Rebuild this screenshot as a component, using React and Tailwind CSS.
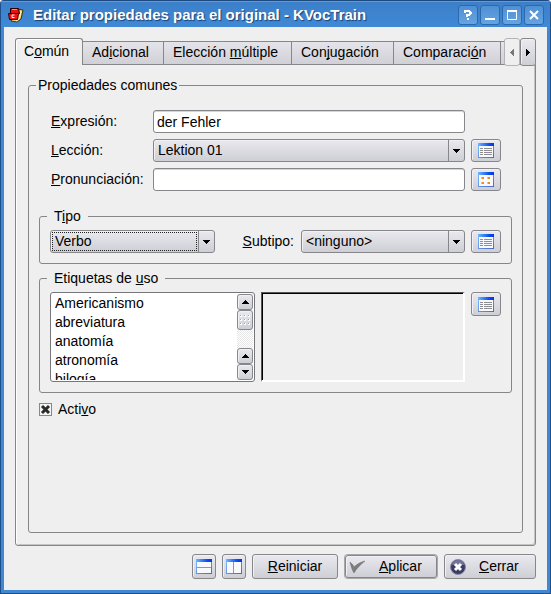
import React from "react";

const frame = "rounded-[3px] bg-linear-to-b from-[#e9e9ee] to-[#cecfd6]";
const face = `${frame} border border-[#86868b] shadow-[inset_1px_1px_0_#f1f1f5]`;
const defaultFace = `${frame} border border-[#86868b] shadow-[0_0_0_1px_#a8a8ac,inset_1px_1px_0_#f1f1f5]`;
const fieldsetLine = "border border-[#868686] rounded-[3px] min-w-0";

function U({ children }) {
  return <u className="underline [text-decoration-skip-ink:none]">{children}</u>;
}

function WindowGlyph({ id, children }) {
  return (
    <svg width="16" height="15" viewBox="0 0 16 15" shapeRendering="crispEdges" aria-hidden="true">
      <defs>
        <linearGradient id={id + "-bar"}>
          <stop offset="0" stopColor="#6db9ff" />
          <stop offset="0.7" stopColor="#0a4cf0" />
          <stop offset="1" stopColor="#0038dc" />
        </linearGradient>
        <linearGradient id={id + "-edge"} x2="1" y2="1">
          <stop offset="0" stopColor="#7cc0ff" />
          <stop offset="1" stopColor="#4a66c8" />
        </linearGradient>
      </defs>
      <rect width="16" height="15" fill={`url(#${id}-edge)`} />
      <rect x="1" y="3" width="14" height="11" fill="#f8f9fe" />
      <rect width="16" height="3" fill={`url(#${id}-bar)`} />
      {children}
    </svg>
  );
}

function ListGlyph({ id }) {
  return (
    <WindowGlyph id={id}>
      {[5, 7, 9, 11].map((y) => (
        <g key={y} fill="#8e8e92">
          <rect x="2" y={y} width="3" height="1" />
          <rect x="6" y={y} width="8" height="1" />
        </g>
      ))}
    </WindowGlyph>
  );
}

function DotsGlyph({ id }) {
  return (
    <WindowGlyph id={id}>
      {[5, 10].map((y) => (
        <g key={y} fill="#f08a1c">
          <rect x="4" y={y} width="2" height="2" />
          <rect x="10" y={y} width="2" height="2" />
          <rect x="3" y={y} width="1" height="2" fill="#fbc27a" />
          <rect x="9" y={y} width="1" height="2" fill="#fbc27a" />
        </g>
      ))}
    </WindowGlyph>
  );
}

function IconButton({ label, className = "h-[23px]", children }) {
  return (
    <button type="button" aria-label={label} className={`${face} flex items-center justify-center ${className}`}>
      {children}
    </button>
  );
}

function Arrow({ dir, className = "text-black" }) {
  const shapes = {
    up: "M3 0h1v1h1v1h1v1h1v1H0V3h1V2h1V1h1z",
    down: "M0 0h7v1H6v1H5v1H4v1H3V3H2V2H1V1H0z",
    left: "M4 0v7H3V6H2V5H1V4H0V3h1V2h1V1h1V0z",
    right: "M0 0v7h1V6h1V5h1V4h1V3H3V2H2V1H1V0z",
  };
  const wide = dir === "up" || dir === "down";
  return (
    <svg
      width={wide ? 7 : 4}
      height={wide ? 4 : 7}
      shapeRendering="crispEdges"
      className={`fill-current ${className}`}
      aria-hidden="true"
    >
      <path d={shapes[dir]} />
    </svg>
  );
}

function Combo({ id, value, focused }) {
  return (
    <div className="relative h-[23px]">
      <select id={id} defaultValue={value} className={`${face} h-full w-full appearance-none pb-px pl-1 outline-none`}>
        <option>{value}</option>
      </select>
      {focused && (
        <span className="pointer-events-none absolute inset-y-[2px] right-[18px] left-[2px] border border-dotted border-[#222]" />
      )}
      <span className="pointer-events-none absolute inset-y-px right-px flex w-4 items-center justify-center border-l border-[#86868b]">
        <Arrow dir="down" />
      </span>
    </div>
  );
}

function TitleButton({ label, children }) {
  return (
    <button
      type="button"
      aria-label={label}
      className="flex size-5 items-center justify-center rounded-[3px] border border-[#2d68ad] bg-linear-to-b from-[#4f8fd3] to-[#65a4e2]"
    >
      <svg width="12" height="12" viewBox="0 0 12 12" fill="none" stroke="#fff" strokeWidth="2" className="shrink-0" aria-hidden="true">
        {children}
      </svg>
    </button>
  );
}

function TitleBar() {
  return (
    <header className="flex h-[27px] items-center border-t border-[#1c4a80] bg-linear-to-b from-[#3c7fc8] to-[#4089d6] pr-[6px] pl-[7px] shadow-[inset_0_1px_0_#5a9ee0]">
      <svg width="16" height="16" viewBox="0 0 16 16" className="mt-px mr-[9px] shrink-0" aria-hidden="true">
        <path d="M9 2l6 1-2 9-4 3-6-1z" fill="#ecd26c" stroke="#3c3010" />
        <path d="M13 4l-2 8-3 2" fill="none" stroke="#fff7c0" />
        <path d="M2.500 1.500h8l1 5h-9z" fill="#e81010" stroke="#2a0000" />
        <path d="M4 2.500h5" stroke="#ff8a80" />
        <path d="M0.500 6.500h10l-1 6h-8z" fill="#f01414" stroke="#3a0000" />
        <path d="M6.500 8H4v2.500h2.500" fill="none" stroke="#fff" />
      </svg>
      <h1 className="min-w-0 flex-1 truncate text-[15px] font-bold text-white [text-shadow:1px_1px_1px_#173f70]">
        Editar propiedades para el original - KVocTrain
      </h1>
      <div className="mt-[2px] flex gap-[2px]">
        <TitleButton label="Ayuda">
          <path d="M2 2h6M8 2v4M9 3v2M3 1v3M8 6H5v2M6 9v2" />
        </TitleButton>
        <TitleButton label="Minimizar">
          <path d="M1 10h10" />
        </TitleButton>
        <TitleButton label="Maximizar">
          <path d="M1 2h10" />
          <path d="M1.500 2v8.500h9V2" strokeWidth="1" />
        </TitleButton>
        <TitleButton label="Cerrar ventana">
          <path d="M2 2l8 8M10 2l-8 8" />
        </TitleButton>
      </div>
    </header>
  );
}

function Tab({ width, children }) {
  return (
    <button
      type="button"
      role="tab"
      aria-selected="false"
      className={`h-6 shrink-0 border-y border-r border-[#86868b] bg-linear-to-b from-[#e4e4e9] to-[#d0d0d7] pb-px pl-[9px] text-left ${width}`}
    >
      {children}
    </button>
  );
}

function Tabs() {
  return (
    <div className="relative z-10 -mb-px flex h-[27px]">
      <div role="tablist" className="flex min-w-0 flex-1 items-end overflow-hidden">
        <button
          type="button"
          role="tab"
          aria-selected="true"
          className="h-[27px] w-[68px] shrink-0 rounded-t-[3px] border border-b-0 border-[#868686] bg-[#efefef] pb-[2px] pl-2 text-left shadow-[inset_1px_1px_0_#fff]"
        >
          C<U>o</U>mún
        </button>
        <Tab width="w-[81px]">Ad<U>i</U>cional</Tab>
        <Tab width="w-[128px]">Elección <U>m</U>últiple</Tab>
        <Tab width="w-[102px]">Con<U>j</U>ugación</Tab>
        <Tab width="w-[107px]">Comparaci<U>ó</U>n</Tab>
        <Tab width="w-[60px]"> </Tab>
      </div>
      <button
        type="button"
        aria-label="Pestañas anteriores"
        disabled
        className="flex h-[28px] w-4 items-center justify-center rounded-[3px] border border-[#b4b4b8] bg-[#efefef]"
      >
        <Arrow dir="left" className="text-[#777]" />
      </button>
      <button
        type="button"
        aria-label="Pestañas siguientes"
        className={`${face} flex h-[28px] w-4 items-center justify-center`}
      >
        <Arrow dir="right" />
      </button>
    </div>
  );
}

function ScrollButton({ dir, label }) {
  return (
    <button type="button" aria-label={label} className={`${face} flex h-4 w-full shrink-0 items-center justify-center`}>
      <Arrow dir={dir} />
    </button>
  );
}

function UsageList() {
  return (
    <div className="flex h-[90px] rounded-[3px] border border-[#77777b] bg-white p-px">
      <select
        multiple
        aria-labelledby="uso"
        className="h-full min-w-0 flex-1 appearance-none overflow-hidden bg-white pt-px outline-none"
      >
        {["Americanismo", "abreviatura", "anatomía", "atronomía", "bilogía"].map((name) => (
          <option key={name} className="h-[19px] px-[3px] leading-[19px]">
            {name}
          </option>
        ))}
      </select>
      <div className="flex w-4 flex-col bg-[repeating-conic-gradient(#e6e6e6_0_25%,#fff_0_50%)] bg-size-[2px_2px]">
        <ScrollButton dir="up" label="Subir" />
        <div className={`${face} flex h-5 items-center justify-center`}>
          <svg width="10" height="10" shapeRendering="crispEdges" aria-hidden="true">
            {[0, 4, 8].map((y) =>
              [0, 4, 8].map((x) => (
                <g key={x + "-" + y}>
                  <rect x={x} y={y} width="2" height="2" fill="#fff" />
                  <rect x={x} y={y} width="1" height="1" fill="#a2a2a8" />
                </g>
              ))
            )}
          </svg>
        </div>
        <div className="flex-1" />
        <ScrollButton dir="up" label="Subir una línea" />
        <ScrollButton dir="down" label="Bajar" />
      </div>
    </div>
  );
}

const textBox =
  "h-[23px] w-full min-w-0 rounded-[3px] border border-[#86868b] bg-white pl-[3px] outline-none shadow-[inset_0_1px_0_#d5d5d5]";

export default function App() {
  return (
    <div className="min-h-screen bg-white font-['Liberation_Sans',Arial,sans-serif] text-sm leading-[17px] text-black">
      <div className="flex min-h-screen flex-col overflow-hidden rounded-t-[4px] border-r border-b border-l border-[#1f4f88] bg-[#3f88d5]">
        <TitleBar />
        <main className="mx-[3px] mb-[3px] flex flex-1 flex-col bg-[#efefef] p-[11px]">
          <Tabs />
          <section className="flex flex-1 flex-col rounded-b-[3px] border border-[#868686] p-3 shadow-[inset_1px_0_0_#fff,inset_-1px_-1px_0_#c4c4c4]">
            <fieldset className={`${fieldsetLine} flex-1 px-[10px] pt-4`}>
              <legend className="-ml-[3px] px-[2px]">Propiedades comunes</legend>

              <div className="mx-[11px] grid grid-cols-[97px_1fr_30px] items-center gap-[6px]">
                <label htmlFor="expresion" className="pl-px"><U>E</U>xpresión:</label>
                <input id="expresion" defaultValue="der Fehler" className={textBox} />
                <span />
                <label htmlFor="leccion" className="pl-px"><U>L</U>ección:</label>
                <Combo id="leccion" value="Lektion 01" />
                <IconButton label="Editar lecciones"><ListGlyph id="g1" /></IconButton>
                <label htmlFor="pronunciacion" className="pl-px"><U>P</U>ronunciación:</label>
                <input id="pronunciacion" className={textBox} />
                <IconButton label="Caracteres fonéticos"><DotsGlyph id="g2" /></IconButton>
              </div>

              <fieldset className={`${fieldsetLine} mt-[17px] px-[10px] pt-[5px] pb-[10px]`}>
                <legend className="-ml-[3px] px-[7px]">T<U>i</U>po</legend>
                <div className="grid grid-cols-[165fr_86px_164fr_36px] items-center">
                  <Combo id="tipo" value="Verbo" focused />
                  <label htmlFor="subtipo" className="pr-[7px] text-right"><U>S</U>ubtipo:</label>
                  <Combo id="subtipo" value="<ninguno>" />
                  <IconButton label="Editar tipos" className="ml-[6px] h-[23px]"><ListGlyph id="g3" /></IconButton>
                </div>
              </fieldset>

              <fieldset className={`${fieldsetLine} mt-[6px] px-[10px] pt-[5px] pb-[10px]`}>
                <legend id="uso" className="-ml-[3px] px-[7px]">Etiquetas de <U>u</U>so</legend>
                <div className="grid grid-cols-[205fr_204fr_30px] items-start gap-[6px]">
                  <UsageList />
                  <div className="h-[90px] border-t border-r-2 border-b-2 border-l border-t-[#555] border-r-white border-b-white border-l-[#555] shadow-[inset_1px_1px_0_#000]" />
                  <IconButton label="Editar etiquetas" className="h-6"><ListGlyph id="g4" /></IconButton>
                </div>
              </fieldset>

              <label className="mt-2 flex w-fit items-center gap-[6px]">
                <span className="relative flex">
                  <input
                    type="checkbox"
                    defaultChecked
                    className="peer size-[13px] appearance-none border border-[#86868b] bg-[#f4f4f4]"
                  />
                  <svg
                    width="13"
                    height="13"
                    className="pointer-events-none absolute inset-0 hidden peer-checked:block"
                    aria-hidden="true"
                  >
                    <path d="M3 3l7 7M10 3l-7 7" stroke="#2a2a2a" strokeWidth="3" />
                  </svg>
                </span>
                <span>Acti<U>v</U>o</span>
              </label>
            </fieldset>
          </section>

          <footer className="mt-2 flex justify-end gap-[6px]">
            <IconButton label="Dividir en horizontal" className="h-[25px] w-6">
              <WindowGlyph id="g5"><path d="M1 8h14v1H1z" fill="#6a9ae8" /></WindowGlyph>
            </IconButton>
            <IconButton label="Dividir en vertical" className="h-[25px] w-6">
              <WindowGlyph id="g6"><path d="M7 3h1v11H7z" fill="#6a9ae8" /></WindowGlyph>
            </IconButton>
            <button type="button" className={`${face} h-[25px] w-[86px] pb-px`}><U>R</U>einiciar</button>
            <div className="flex w-[94px] p-px">
              <button type="button" className={`${defaultFace} flex h-[23px] w-full items-center pl-[3px]`}>
                <svg width="17" height="14" viewBox="0 0 17 14" className="mr-[13px]" aria-hidden="true">
                  <path d="M1 2l3 3 1 2C8 4 12 2 16 1 11 5 8 8 5 13 3 10 2 6 1 2z" fill="#7c7c7c" stroke="#686868" strokeWidth="0.500" />
                </svg>
                <span className="pb-px"><U>A</U>plicar</span>
              </button>
            </div>
            <button type="button" className={`${face} flex h-[25px] w-[92px] items-center pl-[5px]`}>
              <svg width="16" height="16" viewBox="0 0 16 16" className="mr-[13px]" aria-hidden="true">
                <circle cx="8" cy="8" r="7.500" fill="#3b3c66" stroke="#8b8ca6" />
                <path d="M2 6a6 5 0 0112 0z" fill="#74759a" />
                <path d="M5 5l6 6M11 5l-6 6" stroke="#fff" strokeWidth="3" />
              </svg>
              <span className="pb-px"><U>C</U>errar</span>
            </button>
          </footer>
        </main>
      </div>
    </div>
  );
}
